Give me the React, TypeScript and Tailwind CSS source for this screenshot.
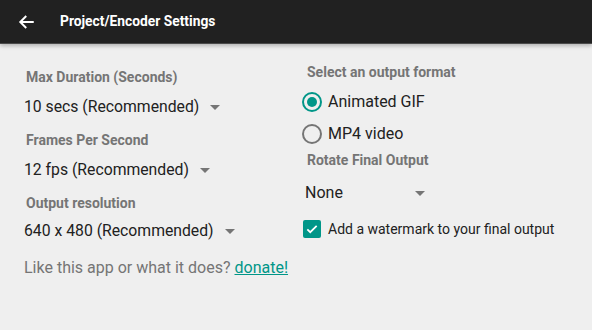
import React, { useState } from "react";

const Caret = () => (
  <svg width="10" height="5" viewBox="0 0 10 5" className="shrink-0">
    <path d="M0 0h10L5 5z" fill="#757575" />
  </svg>
);

const Label = ({ children, className = "" }: { children: React.ReactNode; className?: string }) => (
  <div className={`text-[14px] leading-5 font-bold text-[#757575] whitespace-nowrap ${className}`}>{children}</div>
);

const Select = ({ value }: { value: string }) => (
  <div className="flex items-center gap-[11px] h-6 text-[15.75px] text-[#212121] whitespace-nowrap">
    <span>{value}</span>
    <Caret />
  </div>
);

const Radio = ({ checked, label, onClick }: { checked: boolean; label: string; onClick: () => void }) => (
  <button onClick={onClick} className="flex items-center gap-[6px] h-6 text-[16px] text-[#212121]">
    <span
      className={`w-5 h-5 rounded-full border-2 flex items-center justify-center ${
        checked ? "border-[#009688]" : "border-[#757575]"
      }`}
    >
      {checked && <span className="w-[10px] h-[10px] rounded-full bg-[#009688]" />}
    </span>
    <span>{label}</span>
  </button>
);

export default function App() {
  const [format, setFormat] = useState("gif");
  const [watermark, setWatermark] = useState(true);

  return (
    <div className="w-[592px] h-[330px] bg-[#efefef] overflow-hidden" style={{ fontFamily: "Roboto, 'Liberation Sans', sans-serif" }}>
      <header className="h-[44px] bg-[#212121] flex items-center border-b border-[#4a4a4a] shadow-[0_2px_4px_rgba(0,0,0,0.25)]">
        <svg className="ml-[18px]" width="18" height="18" viewBox="0 0 24 24" fill="none" stroke="white" strokeWidth="2.6">
          <path d="M21 12H4M11 4l-8 8 8 8" />
        </svg>
        <h1 className="ml-[24px] text-white text-[13.8px] font-bold">Project/Encoder Settings</h1>
      </header>

      <div className="flex">
        <div className="w-[278px] shrink-0 pl-6 pt-[23px]">
          <Label className="ml-[2px]">Max Duration (Seconds)</Label>
          <div className="mt-[8px]">
            <Select value="10 secs (Recommended)" />
          </div>
          <Label className="ml-[2px] mt-[11px]">Frames Per Second</Label>
          <div className="mt-[8px]">
            <Select value="12 fps (Recommended)" />
          </div>
          <Label className="ml-[2px] mt-[11px]">Output resolution</Label>
          <div className="mt-[6px]">
            <Select value="640 x 480 (Recommended)" />
          </div>
          <p className="mt-[13px] text-[16px] leading-6 text-[#757575] whitespace-nowrap">
            Like this app or what it does?{" "}
            <a href="#" className="text-[#009688] underline">donate!</a>
          </p>
        </div>

        <div className="pl-[24px] pt-[18px]">
          <Label className="ml-[5px]">Select an output format</Label>
          <div className="mt-[8px] flex flex-col gap-[8px]">
            <Radio checked={format === "gif"} label="Animated GIF" onClick={() => setFormat("gif")} />
            <Radio checked={format === "mp4"} label="MP4 video" onClick={() => setFormat("mp4")} />
          </div>
          <Label className="ml-[5px] mt-[4px]">Rotate Final Output</Label>
          <div className="mt-[11px] ml-[3px] w-[120px] flex items-center justify-between h-6 text-[16px] text-[#212121]">
            <span>None</span>
            <Caret />
          </div>
          <button
            onClick={() => setWatermark(!watermark)}
            className="mt-[12px] ml-[1px] flex items-center gap-[7px] h-6 text-[14px] text-[#212121] whitespace-nowrap"
          >
            <span className={`w-[18px] h-[18px] rounded-[2px] flex items-center justify-center ${watermark ? "bg-[#009688]" : "border-2 border-[#757575]"}`}>
              {watermark && (
                <svg width="14" height="14" viewBox="0 0 24 24" fill="none" stroke="white" strokeWidth="3">
                  <path d="M4 12.5l5 5L20 6.5" />
                </svg>
              )}
            </span>
            <span>Add a watermark to your final output</span>
          </button>
        </div>
      </div>
    </div>
  );
}
